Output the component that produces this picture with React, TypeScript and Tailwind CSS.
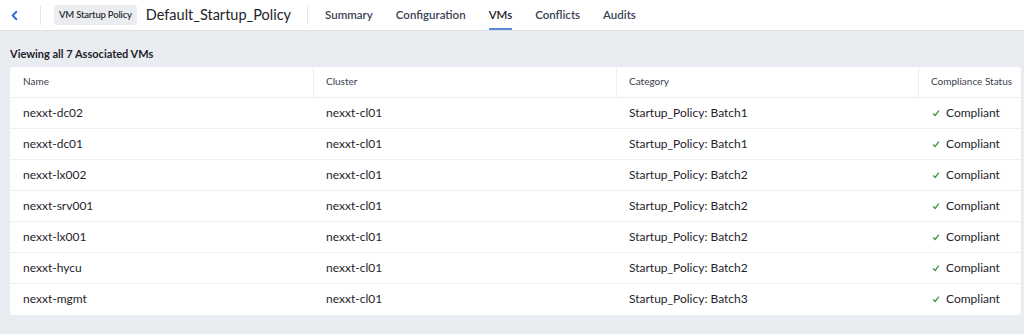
import { ChevronLeft } from "lucide-react";

const rows = [
  ["nexxt-dc02", "nexxt-cl01", "Startup_Policy: Batch1"],
  ["nexxt-dc01", "nexxt-cl01", "Startup_Policy: Batch1"],
  ["nexxt-lx002", "nexxt-cl01", "Startup_Policy: Batch2"],
  ["nexxt-srv001", "nexxt-cl01", "Startup_Policy: Batch2"],
  ["nexxt-lx001", "nexxt-cl01", "Startup_Policy: Batch2"],
  ["nexxt-hycu", "nexxt-cl01", "Startup_Policy: Batch2"],
  ["nexxt-mgmt", "nexxt-cl01", "Startup_Policy: Batch3"],
];

const tabs = ["Summary", "Configuration", "VMs", "Conflicts", "Audits"];

export default function App() {
  return (
    <div
      className="h-[334px] w-[1024px] bg-[#e9ecf0] text-[#22272e]"
      style={{ fontFamily: "Lato, 'Liberation Sans', sans-serif" }}
    >
      {/* top bar */}
      <header className="flex h-[31px] items-center border-b border-[#dde1e6] bg-white">
        <div className="flex w-[41px] items-center justify-center border-r border-[#e3e6ea] h-[19px]">
          <ChevronLeft className="ml-[-12px] h-[15px] w-[15px] text-[#2c6ddc]" strokeWidth={3} />
        </div>
        <span className="ml-[13px] rounded-[3px] bg-[#ebedf0] px-[5px] py-[3px] text-[9.5px] font-semibold tracking-[-0.2px] text-[#2b3038]">
          VM Startup Policy
        </span>
        <h1 className="ml-[9px] text-[14.5px] text-[#1f242b]">Default_Startup_Policy</h1>
        <div className="ml-[16px] h-[19px] border-l border-[#e3e6ea]" />
        <nav className="ml-[17px] flex h-full items-stretch gap-[23px] text-[11.5px] font-semibold text-[#3a4250]">
          {tabs.map((t) => (
            <span
              key={t}
              className={
                t === "VMs"
                  ? "flex items-center border-b-2 border-[#5b86d4] pt-[2px] text-[#1e232a]"
                  : "flex items-center"
              }
            >
              {t}
            </span>
          ))}
        </nav>
      </header>

      <div className="pl-[10px] pr-[3px] pt-[15px]">
        <div className="mb-[4px] text-[11px] font-bold text-[#1e232a]">Viewing all 7 Associated VMs</div>

        <div className="overflow-hidden rounded-[3px] bg-white">
          <div className="grid h-[31px] grid-cols-[303px_303px_302px_1fr] border-b border-[#edf0f2] text-[10px] text-[#3a414c]">
            <div className="flex items-center pl-[13px]">Name</div>
            <div className="flex items-center border-l border-[#edf0f2] pl-[12px]">Cluster</div>
            <div className="flex items-center border-l border-[#edf0f2] pl-[12px]">Category</div>
            <div className="flex items-center border-l border-[#edf0f2] pl-[12px]">Compliance Status</div>
          </div>
          {rows.map(([name, cluster, category], i) => (
            <div
              key={name}
              className={
                "grid h-[31px] grid-cols-[303px_303px_302px_1fr] text-[12px] text-[#1f242b] " +
                (i < rows.length - 1 ? "border-b border-[#edf0f2]" : "")
              }
            >
              <div className="flex items-center pl-[13px]">{name}</div>
              <div className="flex items-center pl-[13px]">{cluster}</div>
              <div className="flex items-center pl-[13px]">{category}</div>
              <div className="flex items-center pl-[14px]">
                <svg viewBox="0 0 10 10" className="mr-[6px] h-[8px] w-[8px]">
                  <path d="M1.5 5.5 L4 8 L8.5 2" fill="none" stroke="#3f9a4a" strokeWidth="1.8" />
                </svg>
                Compliant
              </div>
            </div>
          ))}
        </div>
      </div>
    </div>
  );
}
